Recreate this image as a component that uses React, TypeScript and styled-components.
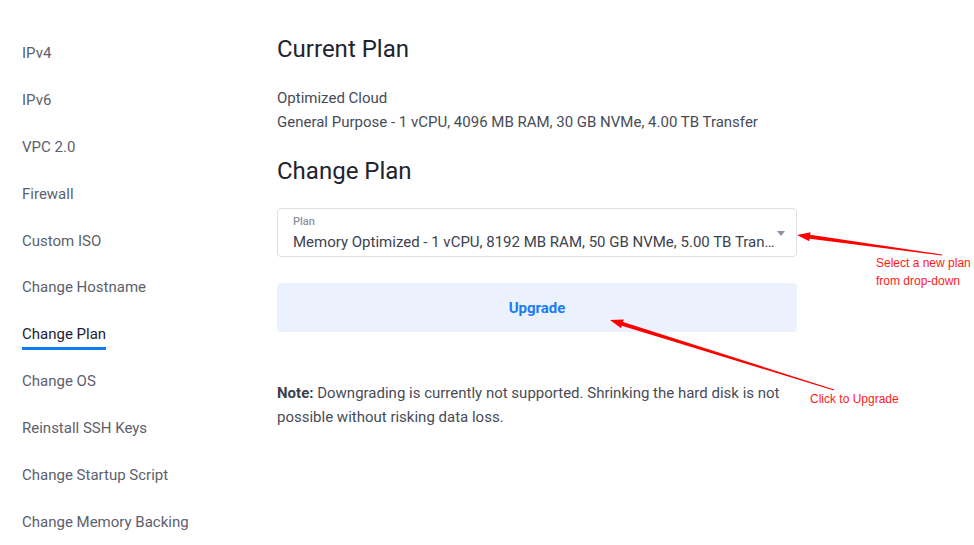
import React from 'react';
import styled, { createGlobalStyle } from 'styled-components';

const GlobalStyle = createGlobalStyle`
  body {
    margin: 0;
    background: #ffffff;
    font-family: Roboto, 'Noto Sans', Arial, sans-serif;
  }
`;

const Page = styled.div`
  position: relative;
  display: flex;
  width: 974px;
  height: 545px;
  overflow: hidden;
`;

const Sidebar = styled.nav`
  display: flex;
  flex-direction: column;
  width: 255px;
  padding: 30px 0 0 22px;
`;

const NavItem = styled.div`
  display: flex;
  align-items: center;
  height: 47.15px;
`;

const NavLabel = styled.span<{ $active?: boolean }>`
  position: relative;
  font-size: 15px;
  line-height: 20px;
  color: ${(p) => (p.$active ? '#1b2233' : '#5c616d')};

  ${(p) =>
    p.$active &&
    `
    &::after {
      content: '';
      position: absolute;
      left: 0;
      right: 0;
      top: calc(100% + 3px);
      height: 3px;
      background: #0d7bf2;
    }
  `}
`;

const Main = styled.main`
  display: flex;
  flex-direction: column;
  width: 520px;
  padding-top: 33px;
`;

const Heading = styled.h2`
  margin: 0 0 21px;
  font-size: 24px;
  line-height: 32px;
  font-weight: 400;
  color: #1e2330;
`;

const PlanInfo = styled.div`
  margin-bottom: 21px;
  font-size: 15px;
  line-height: 24px;
  color: #474c58;
`;

const SelectBox = styled.div`
  position: relative;
  display: flex;
  flex-direction: column;
  gap: 3px;
  height: 49px;
  box-sizing: border-box;
  padding: 6px 19px 0 15px;
  border: 1px solid #dcdfe5;
  border-radius: 4px;
`;

const SelectLabel = styled.span`
  font-size: 11px;
  line-height: 14px;
  font-weight: 500;
  color: #8a92a5;
`;

const SelectValue = styled.span`
  font-size: 15px;
  line-height: 20px;
  color: #3d4250;
  white-space: nowrap;
  overflow: hidden;
  text-overflow: ellipsis;
`;

const Caret = styled.span`
  position: absolute;
  right: 11px;
  top: 22px;
  width: 0;
  height: 0;
  border-left: 4.5px solid transparent;
  border-right: 4.5px solid transparent;
  border-top: 5px solid #8a92a5;
`;

const UpgradeButton = styled.button`
  margin-top: 26px;
  height: 49px;
  border: none;
  border-radius: 4px;
  background: #ebf2fe;
  color: #1a7cf3;
  font-family: inherit;
  font-size: 15px;
  font-weight: 700;
  cursor: pointer;
`;

const Note = styled.p`
  margin: 49px 0 0;
  font-size: 15px;
  line-height: 24px;
  color: #474c58;
`;

const NoteLead = styled.strong`
  font-weight: 700;
  color: #3a3f4b;
`;

const Overlay = styled.svg`
  position: absolute;
  left: 0;
  top: 0;
  pointer-events: none;
`;

const Callout = styled.span<{ $x: number; $y: number }>`
  position: absolute;
  left: ${(p) => p.$x}px;
  top: ${(p) => p.$y}px;
  font-family: 'Liberation Sans', Arial, sans-serif;
  font-size: 12px;
  line-height: 18px;
  color: #ff1a1a;
  white-space: nowrap;
`;

const navItems = [
  'IPv4',
  'IPv6',
  'VPC 2.0',
  'Firewall',
  'Custom ISO',
  'Change Hostname',
  'Change Plan',
  'Change OS',
  'Reinstall SSH Keys',
  'Change Startup Script',
  'Change Memory Backing',
];

// tapered red arrow from tail (x1,y1) to tip (x2,y2)
const arrowPoints = (x1: number, y1: number, x2: number, y2: number) => {
  const dx = x2 - x1;
  const dy = y2 - y1;
  const len = Math.hypot(dx, dy);
  const ux = dx / len;
  const uy = dy / len;
  const nx = -uy;
  const ny = ux;
  const head = 13;
  const bx = x2 - ux * head;
  const by = y2 - uy * head;
  const pts = [
    [x1 + nx * 0.5, y1 + ny * 0.5],
    [bx + nx * 2, by + ny * 2],
    [bx + nx * 4.5, by + ny * 4.5],
    [x2, y2],
    [bx - nx * 4.5, by - ny * 4.5],
    [bx - nx * 2, by - ny * 2],
    [x1 - nx * 0.5, y1 - ny * 0.5],
  ];
  return pts.map((p) => p.join(',')).join(' ');
};

export default function App() {
  return (
    <Page>
      <GlobalStyle />
      <Sidebar>
        {navItems.map((item) => (
          <NavItem key={item}>
            <NavLabel $active={item === 'Change Plan'}>{item}</NavLabel>
          </NavItem>
        ))}
      </Sidebar>

      <Main>
        <Heading>Current Plan</Heading>
        <PlanInfo>
          Optimized Cloud
          <br />
          General Purpose - 1 vCPU, 4096 MB RAM, 30 GB NVMe, 4.00 TB Transfer
        </PlanInfo>

        <Heading>Change Plan</Heading>
        <SelectBox>
          <SelectLabel>Plan</SelectLabel>
          <SelectValue>
            Memory Optimized - 1 vCPU, 8192 MB RAM, 50 GB NVMe, 5.00 TB Transfer
          </SelectValue>
          <Caret />
        </SelectBox>

        <UpgradeButton>Upgrade</UpgradeButton>

        <Note>
          <NoteLead>Note:</NoteLead> Downgrading is currently not supported. Shrinking the hard disk
          is not possible without risking data loss.
        </Note>
      </Main>

      <Overlay width="974" height="545" viewBox="0 0 974 545">
        <polygon points={arrowPoints(942, 255, 797, 235)} fill="#ff0000" />
        <polygon points={arrowPoints(834, 390, 610, 320)} fill="#ff0000" />
      </Overlay>
      <Callout $x={876} $y={254}>Select a new plan</Callout>
      <Callout $x={876} $y={272}>from drop-down</Callout>
      <Callout $x={810} $y={390}>Click to Upgrade</Callout>
    </Page>
  );
}
